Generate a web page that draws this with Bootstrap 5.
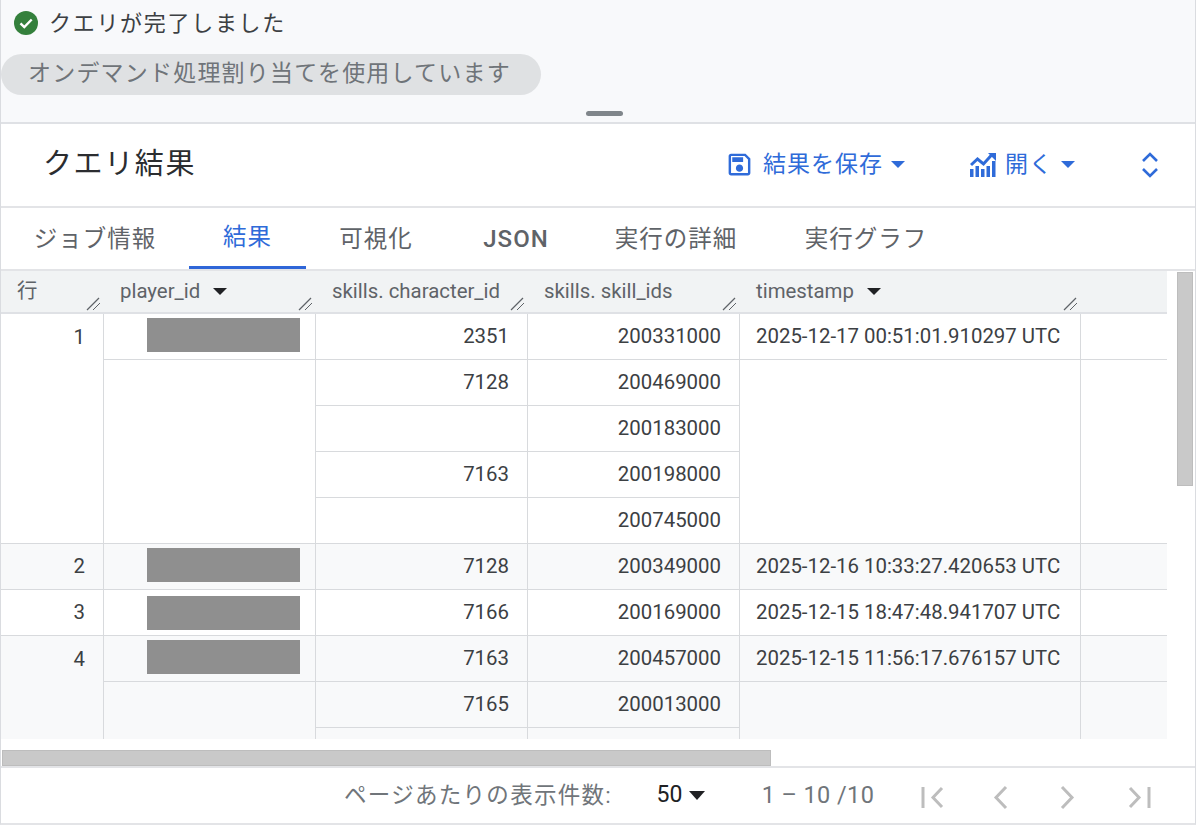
<!DOCTYPE html>
<html lang="ja">
<head>
    <meta charset="UTF-8">
    <title>クエリ結果</title>
    <link href="https://cdn.jsdelivr.net/npm/bootstrap@5.3.0/dist/css/bootstrap.min.css" rel="stylesheet">
    <style>
        html, body { height: 830px; overflow: hidden; background: #fff; }
        body { font-family: Roboto, "Noto Sans CJK JP", sans-serif; color: #3c4043; }
        .shell { width: 1196px; height: 825px; border-left: 1px solid #dadce0; border-right: 1px solid #dadce0; border-bottom: 2px solid #e3e4e7; }

        .job-status { height: 124px; background: #f8f9fb; border-bottom: 2px solid #dfe1e5; }
        .status-line { height: 46px; padding-left: 13px; font-size: 22px; letter-spacing: 1.7px; color: #3c4043; gap: 11px; }
        .quota-chip { width: 540px; height: 41px; margin-top: 8px; padding-left: 27px; background: #dfe1e3; border-radius: 21px; font-size: 23px; letter-spacing: 1.2px; color: #6f7479; white-space: nowrap; }
        .drag-handle { width: 37px; height: 5px; margin: 16px 0 0 585px; background: #80868b; border-radius: 3px; }

        .result-head { height: 84px; padding: 0 35px 0 42px; border-bottom: 2px solid #e3e4e7; }
        .result-title { font-size: 29px; letter-spacing: 1.6px; color: #2b2d30; font-weight: 400; margin: 0; }
        .head-action { font-size: 23px; letter-spacing: 1px; color: #2f6bd9; white-space: nowrap; margin-right: 65px; }
        .action-icon { margin-right: 9px; }
        .caret-down { display: inline-block; width: 0; height: 0; border-left: 7px solid transparent; border-right: 7px solid transparent; border-top: 7px solid currentColor; }

        .tab-row { height: 63px; border-bottom: 2px solid #e3e4e7; }
        .tab-item { height: 61px; padding-top: 2px; font-size: 23.5px; letter-spacing: 1px; color: #5f6368; white-space: nowrap; text-align: center; }
        .tab-item.tab-on { color: #2f6bd9; border-bottom: 3px solid #2f66d8; }
        .tab-a { width: 188px; } .tab-b { width: 117px; } .tab-c { width: 140px; } .tab-d { width: 140px; font-size: 24px; font-weight: 500; } .tab-e { width: 180px; } .tab-f { width: 200px; }

        .grid-area { height: 496px; }
        .grid-clip { width: 1166px; height: 468px; overflow: hidden; }
        .results-grid { width: 1166px; table-layout: fixed; border-collapse: separate; border-spacing: 0; margin: 0; font-size: 20.4px; color: #3c4043; --bs-table-bg: transparent; }
        .results-grid th { height: 43px; padding: 0 0 0 16px; background: #f1f3f4; border-bottom: 2px solid #dfe1e5; color: #5f6368; font-weight: 400; position: relative; vertical-align: middle; white-space: nowrap; }
        .results-grid td { height: 46px; padding: 0 18px 0 16px; border-bottom: 1px solid #d8dadd; border-right: 1px solid #d8dadd; text-align: right; vertical-align: middle; white-space: nowrap; }
        .results-grid td.cell-top { vertical-align: top; padding-top: 8px; }
        .results-grid td.cell-text { text-align: left; }
        .results-grid td.cell-last { border-right: 0; }
        .results-grid td.cell-mask { padding: 0 15px 0 43px; vertical-align: top; }
        .row-alt td { background: #f8f9fa; }
        .mask-bar { height: 34px; margin-top: 4px; background: #8f8f8f; }
        .mask-bar-low { margin-top: 6px; }
        .head-caret { margin-left: 13px; color: #202124; vertical-align: 3px; }
        .resize-mark { position: absolute; right: 3px; bottom: 1px; }

        .v-track { width: 16px; height: 214px; margin: 1px 0 0 10px; background: #c9c9c9; border: 1px solid #bdbdbd; }
        .h-track { width: 769px; height: 16px; margin: 11px 0 0 1px; background: #c9c9c9; border: 1px solid #bdbdbd; }

        .pager-row { height: 57px; border-top: 2px solid #e3e4e7; font-size: 22px; color: #70757a; white-space: nowrap; }
        .pager-label { margin-left: 343px; width: 318px; letter-spacing: 1.3px; font-size: 22.5px; }
        .pager-size { width: 107px; color: #202124; font-size: 23px; }
        .pager-caret { border-left-width: 8px; border-right-width: 8px; border-top-width: 9px; margin-left: 7px; }
        .pager-range { width: 161px; letter-spacing: .4px; font-size: 23.5px; }
        .pager-btn { width: 70px; }
    </style>
</head>
<body>
<div class="shell d-flex flex-column">

    <div class="job-status">
        <div class="status-line d-flex align-items-center">
            <svg width="24" height="24" viewBox="0 0 24 24" class="flex-shrink-0"><circle cx="12" cy="12" r="12" fill="#34803c"/><path d="M6.500 12.300l3.800 3.800 7.400-7.600" fill="none" stroke="#fff" stroke-width="2.400"/></svg>
            <span>クエリが完了しました</span>
        </div>
        <div class="quota-chip d-flex align-items-center">オンデマンド処理割り当てを使用しています</div>
        <div class="drag-handle"></div>
    </div>

    <div class="result-head d-flex align-items-center">
        <h1 class="result-title flex-grow-1">クエリ結果</h1>
        <div class="head-action d-flex align-items-center">
            <svg width="29" height="29" viewBox="0 0 24 24" class="action-icon" fill="#2f6bd9"><path d="M17 3H5c-1.110 0-2 .9-2 2v14c0 1.100.89 2 2 2h14c1.100 0 2-.9 2-2V7l-4-4zm2 16H5V5h11.170L19 7.830V19zm-7-7c-1.660 0-3 1.340-3 3s1.340 3 3 3 3-1.340 3-3-1.340-3-3-3zM6 6h9v4H6z"/></svg>
            <span>結果を保存</span><span class="caret-down ms-2"></span>
        </div>
        <div class="head-action d-flex align-items-center">
            <svg width="26" height="26" viewBox="0 0 26 26" class="action-icon" fill="#2f6bd9"><path d="M0 25v-8h3.500v8zM5.500 25v-11h3.500v11zM11 25v-8h3.500v8zM16.500 25v-11h3.500v11zM22 25v-16h3.500v16z"/><path d="M1 13l6.500-6 6 5 9-10" fill="none" stroke="#2f6bd9" stroke-width="3"/><path d="M18 1h8v8z"/></svg>
            <span>開く</span><span class="caret-down ms-2"></span>
        </div>
        <svg width="20" height="28" viewBox="0 0 20 28" fill="none" stroke="#2f6bd9" stroke-width="2.600"><path d="M3 10l7-7 7 7M3 18l7 7 7-7"/></svg>
    </div>

    <div class="tab-row d-flex">
        <div class="tab-item tab-a d-flex align-items-center justify-content-center">ジョブ情報</div>
        <div class="tab-item tab-b tab-on d-flex align-items-center justify-content-center">結果</div>
        <div class="tab-item tab-c d-flex align-items-center justify-content-center">可視化</div>
        <div class="tab-item tab-d d-flex align-items-center justify-content-center">JSON</div>
        <div class="tab-item tab-e d-flex align-items-center justify-content-center">実行の詳細</div>
        <div class="tab-item tab-f d-flex align-items-center justify-content-center">実行グラフ</div>
    </div>

    <div class="grid-area">
        <div class="d-flex">
            <div class="grid-clip">
                <table class="table results-grid">
                    <colgroup><col style="width:103px"><col style="width:212px"><col style="width:212px"><col style="width:212px"><col style="width:341px"><col></colgroup>
                    <thead>
                        <tr>
                            <th>行<svg class="resize-mark" width="15" height="15" viewBox="0 0 15 15" fill="none" stroke="#5f6368"><path d="M1 14L13 2" stroke-width="1.300"/><path d="M7 14l7-7" stroke-width="1"/></svg></th>
                            <th>player_id<span class="caret-down head-caret"></span><svg class="resize-mark" width="15" height="15" viewBox="0 0 15 15" fill="none" stroke="#5f6368"><path d="M1 14L13 2" stroke-width="1.300"/><path d="M7 14l7-7" stroke-width="1"/></svg></th>
                            <th>skills. character_id<svg class="resize-mark" width="15" height="15" viewBox="0 0 15 15" fill="none" stroke="#5f6368"><path d="M1 14L13 2" stroke-width="1.300"/><path d="M7 14l7-7" stroke-width="1"/></svg></th>
                            <th>skills. skill_ids<svg class="resize-mark" width="15" height="15" viewBox="0 0 15 15" fill="none" stroke="#5f6368"><path d="M1 14L13 2" stroke-width="1.300"/><path d="M7 14l7-7" stroke-width="1"/></svg></th>
                            <th>timestamp<span class="caret-down head-caret"></span><svg class="resize-mark" width="15" height="15" viewBox="0 0 15 15" fill="none" stroke="#5f6368"><path d="M1 14L13 2" stroke-width="1.300"/><path d="M7 14l7-7" stroke-width="1"/></svg></th>
                            <th></th>
                        </tr>
                    </thead>
                    <tbody>
                        <tr>
                            <td rowspan="5" class="cell-top">1</td>
                            <td class="cell-mask"><div class="mask-bar"></div></td>
                            <td>2351</td><td>200331000</td>
                            <td class="cell-text">2025-12-17 00:51:01.910297 UTC</td>
                            <td class="cell-last"></td>
                        </tr>
                        <tr><td rowspan="4"></td><td>7128</td><td>200469000</td><td rowspan="4"></td><td rowspan="4" class="cell-last"></td></tr>
                        <tr><td></td><td>200183000</td></tr>
                        <tr><td>7163</td><td>200198000</td></tr>
                        <tr><td></td><td>200745000</td></tr>

                        <tr class="row-alt">
                            <td>2</td><td class="cell-mask"><div class="mask-bar"></div></td>
                            <td>7128</td><td>200349000</td>
                            <td class="cell-text">2025-12-16 10:33:27.420653 UTC</td><td class="cell-last"></td>
                        </tr>
                        <tr>
                            <td>3</td><td class="cell-mask"><div class="mask-bar mask-bar-low"></div></td>
                            <td>7166</td><td>200169000</td>
                            <td class="cell-text">2025-12-15 18:47:48.941707 UTC</td><td class="cell-last"></td>
                        </tr>
                        <tr class="row-alt">
                            <td rowspan="3" class="cell-top">4</td><td class="cell-mask"><div class="mask-bar"></div></td>
                            <td>7163</td><td>200457000</td>
                            <td class="cell-text">2025-12-15 11:56:17.676157 UTC</td><td class="cell-last"></td>
                        </tr>
                        <tr class="row-alt"><td rowspan="2"></td><td>7165</td><td>200013000</td><td rowspan="2"></td><td rowspan="2" class="cell-last"></td></tr>
                        <tr class="row-alt"><td></td><td></td></tr>
                    </tbody>
                </table>
            </div>
            <div class="v-track"></div>
        </div>
        <div class="h-track"></div>
    </div>

    <div class="pager-row d-flex align-items-center">
        <div class="pager-label">ページあたりの表示件数:</div>
        <div class="pager-size d-flex align-items-center">50<span class="caret-down pager-caret"></span></div>
        <div class="pager-range">1 – 10 /10</div>
        <div class="pager-btn"><svg width="26" height="26" viewBox="0 0 26 26" fill="none" stroke="#bdbdbd" stroke-width="3"><path d="M3 3v21M22 4l-9 9.500 9 9.500"/></svg></div>
        <div class="pager-btn"><svg width="26" height="26" viewBox="0 0 26 26" fill="none" stroke="#bdbdbd" stroke-width="3"><path d="M17 3l-10 10.500 10 10.500"/></svg></div>
        <div class="pager-btn"><svg width="26" height="26" viewBox="0 0 26 26" fill="none" stroke="#bdbdbd" stroke-width="3"><path d="M5 3l10 10.500-10 10.500"/></svg></div>
        <div class="pager-btn"><svg width="26" height="26" viewBox="0 0 26 26" fill="none" stroke="#bdbdbd" stroke-width="3"><path d="M23 3v21M4 4l9 9.500-9 9.500"/></svg></div>
    </div>
</div>
<script src="https://cdn.jsdelivr.net/npm/bootstrap@5.3.0/dist/js/bootstrap.bundle.min.js"></script>
</body>
</html>
